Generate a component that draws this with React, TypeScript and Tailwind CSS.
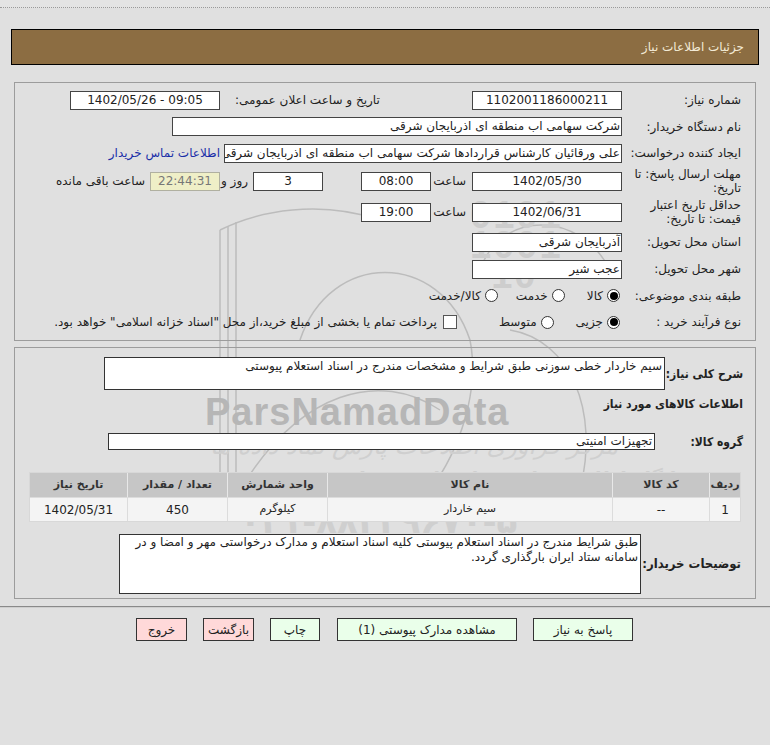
import React from "react";

const FONT = "font-['DejaVu_Sans',Tahoma,sans-serif]";
const BOLD =
  "whitespace-nowrap font-['DejaVu_Sans_Condensed','DejaVu_Sans',sans-serif] font-bold text-[#222]";

function Box({
  w,
  children,
  center = true,
  ltr = false,
  className = "",
}: {
  w: string;
  children?: React.ReactNode;
  center?: boolean;
  ltr?: boolean;
  className?: string;
}) {
  return (
    <div
      dir={ltr ? "ltr" : undefined}
      className={`${w} h-[19px] shrink-0 overflow-hidden whitespace-nowrap border border-[#444] bg-white text-[12px] leading-[17px] text-[#222] ${
        center ? "text-center" : "pr-[1px] text-right"
      } ${className}`}
    >
      {children}
    </div>
  );
}

function Radio({ checked }: { checked?: boolean }) {
  return (
    <span className="inline-flex h-[13px] w-[13px] shrink-0 items-center justify-center rounded-full border border-[#333] bg-white">
      {checked && <span className="h-[8px] w-[8px] rounded-full bg-black" />}
    </span>
  );
}

function Label({ children }: { children: React.ReactNode }) {
  return (
    <div className="w-[118px] shrink-0 text-[12px] leading-[14px] text-[#222]">
      {children}
    </div>
  );
}

function Watermark() {
  return (
    <div className="pointer-events-none absolute inset-0 z-0 overflow-hidden">
      <svg
        className="absolute left-[180px] top-[190px]"
        width="440"
        height="320"
        viewBox="0 0 440 320"
        fill="none"
        stroke="#bcbcbc"
        strokeWidth="1.5"
      >
        <path d="M40 40 C 80 20, 140 10, 200 30" />
        <path d="M40 40 L 40 300" />
        <path d="M48 36 L 48 300" />
        <path d="M56 32 L 56 300" />
        <path d="M120 150 C 150 60, 260 60, 290 150 C 300 200, 280 260, 250 300" />
        <path d="M300 80 C 320 20, 400 20, 430 80" />
        <path d="M60 300 C 120 200, 200 180, 260 220" />
        <path d="M330 140 C 390 150, 420 220, 400 300" />
      </svg>
      <div className="absolute left-[470px] top-[200px] font-['Liberation_Sans',sans-serif] text-[38px] font-bold leading-[30px] tracking-[2px] text-[#cdcdcd]">
        0101
        <br />
        1001
        <br />
        &nbsp;&nbsp;10
      </div>
      <div className="absolute left-[205px] top-[384px] font-['Liberation_Sans',sans-serif] text-[38px] font-bold tracking-[1px] text-[#b6b6b6]">
        ParsNamadData
      </div>
      <div
        dir="rtl"
        className="absolute left-[210px] top-[428px] whitespace-nowrap font-['DejaVu_Sans',sans-serif] text-[24px] italic text-[#cfcfcf]"
      >
        مرکز فراوری اطلاعات پارس نماد داده ها
      </div>
      <div
        dir="rtl"
        className="absolute left-[330px] top-[464px] whitespace-nowrap font-['DejaVu_Sans',sans-serif] text-[19px] font-bold text-[#cfcfcf]"
      >
        پایگاه اطلاع رسانی مناقصات و مزایده
      </div>
      <div className="absolute left-[240px] top-[496px] whitespace-nowrap font-['DejaVu_Sans',sans-serif] text-[34px] font-bold tracking-[2px] text-[#cfcfcf]">
        ۰۲۱-۸۸۳۴۹۶۷۰-۵
      </div>
    </div>
  );
}

export default function App() {
  return (
    <div
      dir="rtl"
      className={`relative h-[745px] w-[770px] overflow-hidden bg-[#e0e0e0] ${FONT}`}
    >
      <Watermark />

      <div className="relative z-10">
        <div className="h-[8px] border-b border-dotted border-[#9a9a9a] bg-[#e4e4e4]" />

        {/* title bar */}
        <div className="mx-[11px] mt-[21px] flex h-[36px] items-center border border-black bg-[#8c6d42] pr-[14px] text-[12px] text-[#f3ead6]">
          جزئیات اطلاعات نیاز
        </div>

        {/* main info panel */}
        <div className="mx-[14px] mt-[17px] h-[259px] border border-[#9c9c9c] pr-[14px] pt-[4px]">
          <div className="flex h-[26px] items-center">
            <Label>شماره نیاز:</Label>
            <Box w="w-[150px]" className="mr-[1px]">1102001186000211</Box>
            <div className="w-[252px] shrink-0 whitespace-nowrap pl-[15px] text-left text-[12px] text-[#222]">
              تاریخ و ساعت اعلان عمومی:
            </div>
            <Box w="w-[150px]" ltr>1402/05/26 - 09:05</Box>
          </div>

          <div className="flex h-[27px] items-center">
            <Label>نام دستگاه خریدار:</Label>
            <Box w="w-[450px]" center={false} className="mr-[1px]">
              شرکت سهامی اب منطقه ای اذربایجان شرقی
            </Box>
          </div>

          <div className="flex h-[26px] items-center">
            <Label>ایجاد کننده درخواست:</Label>
            <Box w="w-[398px]" center={false} className="mr-[1px]">
              علی ورقائیان کارشناس قراردادها شرکت سهامی اب منطقه ای اذربایجان شرقی
            </Box>
            <span className="mr-[4px] whitespace-nowrap text-[12px] text-[#1a2ea8]">
              اطلاعات تماس خریدار
            </span>
          </div>

          <div className="flex h-[30px] items-center">
            <Label>
              مهلت ارسال پاسخ: تا
              <br />
              تاریخ:
            </Label>
            <Box w="w-[150px]" className="mr-[1px]">1402/05/30</Box>
            <span className="mr-[6px] w-[30px] shrink-0 text-[12px] text-[#222]">ساعت</span>
            <Box w="w-[70px]" className="mr-[5px]">08:00</Box>
            <Box w="w-[70px]" className="mr-[38px]">3</Box>
            <span className="mr-[5px] w-[28px] shrink-0 whitespace-nowrap text-[12px] text-[#222]">روز و</span>
            <div className="h-[19px] w-[70px] shrink-0 border border-[#b0b0a0] bg-[#efefc7] text-center text-[12px] leading-[17px] text-[#777]">
              22:44:31
            </div>
            <span className="mr-[5px] whitespace-nowrap text-[12px] text-[#222]">ساعت باقی مانده</span>
          </div>

          <div className="flex h-[32px] items-center">
            <Label>
              حداقل تاریخ اعتبار
              <br />
              قیمت: تا تاریخ:
            </Label>
            <Box w="w-[150px]" className="mr-[1px]">1402/06/31</Box>
            <span className="mr-[6px] w-[30px] shrink-0 text-[12px] text-[#222]">ساعت</span>
            <Box w="w-[70px]" className="mr-[5px]">19:00</Box>
          </div>

          <div className="flex h-[28px] items-center">
            <Label>استان محل تحویل:</Label>
            <Box w="w-[150px]" center={false} className="mr-[1px]">
              آذربایجان شرقی
            </Box>
          </div>

          <div className="flex h-[26px] items-center">
            <Label>شهر محل تحویل:</Label>
            <Box w="w-[150px]" center={false} className="mr-[1px]">
              عجب شیر
            </Box>
          </div>

          <div className="flex h-[27px] items-center text-[12px] text-[#222]">
            <Label>طبقه بندی موضوعی:</Label>
            <div className="mr-[3px] flex items-center gap-[4px]">
              <Radio checked />
              <span>کالا</span>
            </div>
            <div className="mr-[22px] flex items-center gap-[4px]">
              <Radio />
              <span>خدمت</span>
            </div>
            <div className="mr-[18px] flex items-center gap-[4px]">
              <Radio />
              <span>کالا/خدمت</span>
            </div>
          </div>

          <div className="flex h-[26px] items-center text-[12px] text-[#222]">
            <Label>نوع فرآیند خرید :</Label>
            <div className="mr-[3px] flex items-center gap-[4px]">
              <Radio checked />
              <span>جزیی</span>
            </div>
            <div className="mr-[22px] flex items-center gap-[4px]">
              <Radio />
              <span>متوسط</span>
            </div>
            <div className="mr-[42px] flex items-center gap-[6px]">
              <span className="h-[14px] w-[14px] shrink-0 border border-[#555] bg-white" />
              <span className="whitespace-nowrap">
                پرداخت تمام یا بخشی از مبلغ خرید،از محل "اسناد خزانه اسلامی" خواهد بود.
              </span>
            </div>
          </div>
        </div>

        {/* items panel */}
        <div className="mx-[14px] mt-[6px] h-[252px] border border-[#9c9c9c] pl-[15px] pr-[12px] pt-[9px]">
          <div className="flex h-[33px] items-center">
            <div className={`w-[78px] shrink-0 text-[12px] ${BOLD}`}>شرح کلی نیاز:</div>
            <div className="h-[33px] w-[561px] shrink-0 border border-[#333] bg-white pr-[2px] text-[12px] leading-[16px] text-[#222]">
              سیم خاردار خطی سوزنی طبق شرایط و مشخصات مندرج در اسناد استعلام پیوستی
            </div>
          </div>

          <div className={`mt-[4px] flex h-[20px] items-center text-[12px] ${BOLD}`}>
            اطلاعات کالاهای مورد نیاز
          </div>

          <div className="mt-[19px] flex h-[17px] items-center">
            <div className={`w-[88px] shrink-0 text-[12px] ${BOLD}`}>گروه کالا:</div>
            <div className="h-[17px] w-[547px] shrink-0 border border-[#333] bg-white pr-[2px] text-[12px] leading-[15px] text-[#222]">
              تجهیزات امنیتی
            </div>
          </div>

          <div className="mr-[2px] mt-[22px] w-[712px] border border-[#d8d8d8] bg-[#f4f4f4] text-[11px]">
            <div className="flex h-[24px] bg-[#c6c6c6] font-bold text-[#333]">
              <div className="flex w-[30px] items-center justify-center">ردیف</div>
              <div className="flex w-[97px] items-center justify-center border-r border-[#e8e8e8]">کد کالا</div>
              <div className="flex w-[285px] items-center justify-center border-r border-[#e8e8e8]">نام کالا</div>
              <div className="flex w-[100px] items-center justify-center border-r border-[#e8e8e8]">واحد شمارش</div>
              <div className="flex w-[100px] items-center justify-center border-r border-[#e8e8e8]">تعداد / مقدار</div>
              <div className="flex flex-1 items-center justify-center border-r border-[#e8e8e8]">تاریخ نیاز</div>
            </div>
            <div className="flex h-[24px] border-t border-[#dcdcdc] text-[12px] text-[#222]">
              <div className="flex w-[30px] items-center justify-center">1</div>
              <div className="flex w-[97px] items-center justify-center border-r border-[#dcdcdc]">--</div>
              <div className="flex w-[285px] items-center justify-center border-r border-[#dcdcdc] text-[11px]">سیم خاردار</div>
              <div className="flex w-[100px] items-center justify-center border-r border-[#dcdcdc] text-[11px]">کیلوگرم</div>
              <div className="flex w-[100px] items-center justify-center border-r border-[#dcdcdc]">450</div>
              <div className="flex flex-1 items-center justify-center border-r border-[#dcdcdc]">1402/05/31</div>
            </div>
          </div>

          <div className="mt-[12px] flex h-[60px] items-center">
            <div className={`w-[102px] shrink-0 pr-[2px] text-[13px] ${BOLD}`}>توضیحات خریدار:</div>
            <div className="h-[60px] w-[522px] shrink-0 self-start border border-[#333] bg-white pr-[2px] text-[12px] leading-[15px] text-[#222]">
              طبق شرایط مندرج در اسناد استعلام پیوستی کلیه اسناد استعلام و مدارک درخواستی مهر و امضا و در سامانه ستاد ایران بارگذاری گردد.
            </div>
          </div>
        </div>

        <div className="mt-[7px] h-[2px] border-t border-[#8a8a8a] bg-[#cfcfcf]" />

        {/* buttons */}
        <div className="mt-[10px] flex h-[23px] text-[12px] text-[#222]">
          <div className="mr-[137px] flex w-[100px] items-center justify-center border border-[#333] bg-[#eaffea]">
            پاسخ به نیاز
          </div>
          <div className="mr-[16px] flex w-[180px] items-center justify-center border border-[#333] bg-[#eaffea]">
            مشاهده مدارک پیوستی (1)
          </div>
          <div className="mr-[17px] flex w-[50px] items-center justify-center border border-[#333] bg-[#eaffea]">
            چاپ
          </div>
          <div className="mr-[16px] flex w-[51px] items-center justify-center border border-[#333] bg-[#ffd9d9]">
            بازگشت
          </div>
          <div className="mr-[16px] flex w-[51px] items-center justify-center border border-[#333] bg-[#ffd9d9]">
            خروج
          </div>
        </div>
      </div>
    </div>
  );
}
